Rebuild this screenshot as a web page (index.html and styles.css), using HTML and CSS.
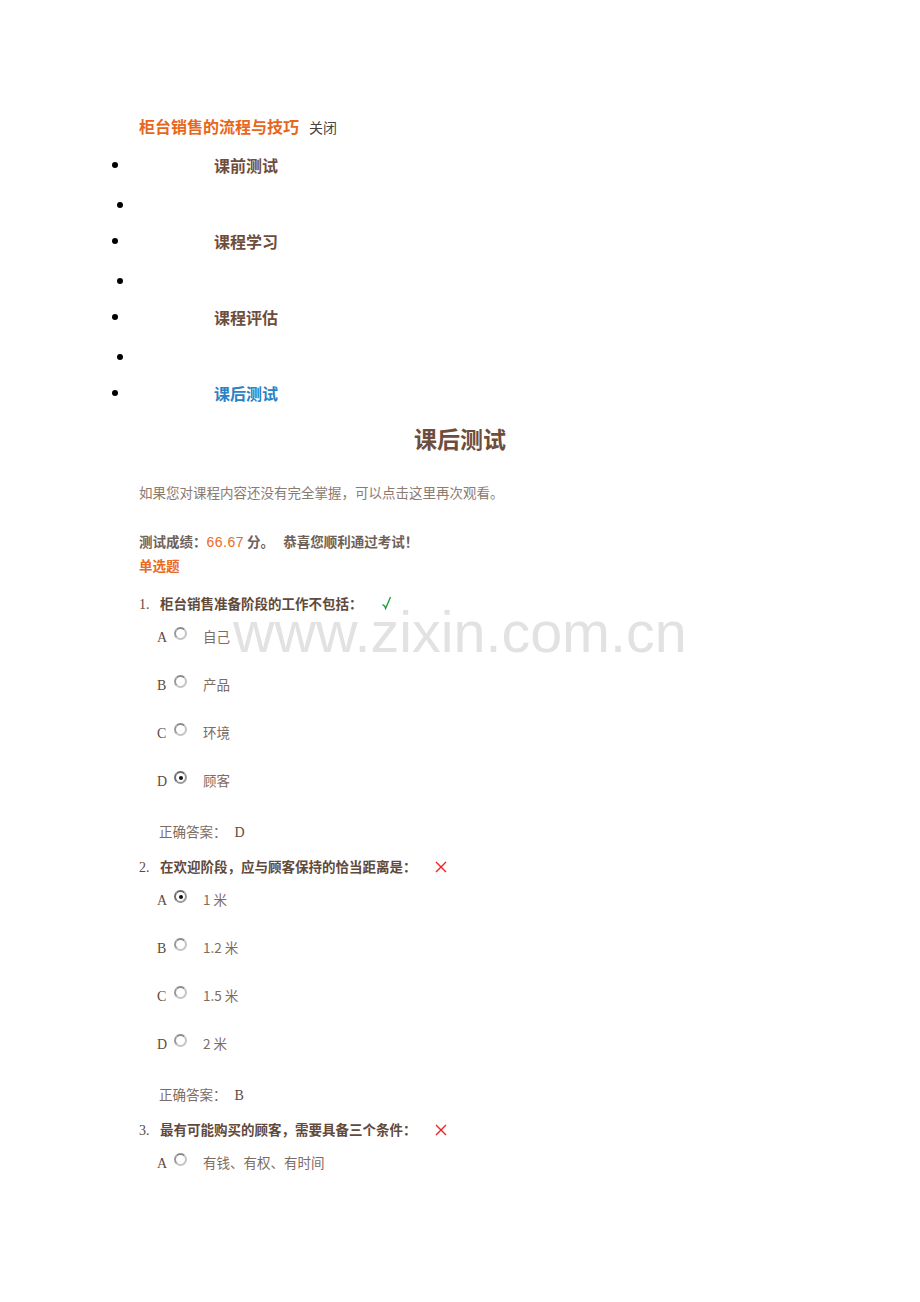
FILE: index.html
```html
<!DOCTYPE html>
<html lang="zh-CN">
<head>
    <meta charset="UTF-8">
    <title>课后测试</title>
    <link rel="stylesheet" href="styles.css">
</head>
<body>
<div class="page">
    <div class="course-title">
        <span class="course-name">柜台销售的流程与技巧</span>
        <span class="close">关闭</span>
    </div>

    <ul class="nav">
        <li class="nav-item"><span class="dot"></span><span class="nav-link">课前测试</span></li>
        <li class="nav-item minor"><span class="dot"></span></li>
        <li class="nav-item"><span class="dot"></span><span class="nav-link">课程学习</span></li>
        <li class="nav-item minor"><span class="dot"></span></li>
        <li class="nav-item"><span class="dot"></span><span class="nav-link">课程评估</span></li>
        <li class="nav-item minor"><span class="dot"></span></li>
        <li class="nav-item"><span class="dot"></span><span class="nav-link active">课后测试</span></li>
    </ul>

    <h2 class="page-title">课后测试</h2>

    <p class="intro">如果您对课程内容还没有完全掌握，可以点击这里再次观看。</p>

    <p class="score">测试成绩：<span class="score-num">66.67</span> 分。 <span class="congrats">恭喜您顺利通过考试！</span></p>
    <p class="section">单选题</p>

    <div class="question">
        <div class="q-title">
            <span class="q-num">1.</span><span class="q-text">柜台销售准备阶段的工作不包括：</span><svg class="mark" width="12" height="14" viewBox="0 0 12 14"><path d="M1.5 8.5 L3.8 10.2 L4.6 12.5 L9.5 1" fill="none" stroke="#22a03a" stroke-width="1.4"/></svg>
        </div>
        <div class="option"><span class="opt-key">A</span><span class="radio"></span><span class="opt-text">自己</span></div>
        <div class="option"><span class="opt-key">B</span><span class="radio"></span><span class="opt-text">产品</span></div>
        <div class="option"><span class="opt-key">C</span><span class="radio"></span><span class="opt-text">环境</span></div>
        <div class="option"><span class="opt-key">D</span><span class="radio checked"></span><span class="opt-text">顾客</span></div>
        <div class="answer">正确答案：<span class="answer-key">D</span></div>
    </div>

    <div class="question">
        <div class="q-title">
            <span class="q-num">2.</span><span class="q-text">在欢迎阶段，应与顾客保持的恰当距离是：</span><svg class="mark cross" width="12" height="12" viewBox="0 0 12 12"><path d="M1 1 L11 11 M11 1 L1 11" fill="none" stroke="#f02020" stroke-width="1.4"/></svg>
        </div>
        <div class="option"><span class="opt-key">A</span><span class="radio checked"></span><span class="opt-text">1 米</span></div>
        <div class="option"><span class="opt-key">B</span><span class="radio"></span><span class="opt-text">1.2 米</span></div>
        <div class="option"><span class="opt-key">C</span><span class="radio"></span><span class="opt-text">1.5 米</span></div>
        <div class="option"><span class="opt-key">D</span><span class="radio"></span><span class="opt-text">2 米</span></div>
        <div class="answer">正确答案：<span class="answer-key">B</span></div>
    </div>

    <div class="question">
        <div class="q-title">
            <span class="q-num">3.</span><span class="q-text">最有可能购买的顾客，需要具备三个条件：</span><svg class="mark cross" width="12" height="12" viewBox="0 0 12 12"><path d="M1 1 L11 11 M11 1 L1 11" fill="none" stroke="#f02020" stroke-width="1.4"/></svg>
        </div>
        <div class="option"><span class="opt-key">A</span><span class="radio"></span><span class="opt-text">有钱、有权、有时间</span></div>
    </div>

    <div class="watermark">www.zixin.com.cn</div>
</div>
</body>
</html>
```

FILE: styles.css
```css
body {
    margin: 0;
    background-color: #fff;
    font-family: "Liberation Serif", "Noto Sans CJK SC", serif;
}
.page {
    position: relative;
    width: 920px;
    padding: 114px 0 0 139px;
    box-sizing: border-box;
}
.course-title {
    height: 24px;
    line-height: 24px;
}
.course-name {
    font-family: "Noto Sans CJK SC", sans-serif;
    font-size: 16px;
    font-weight: bold;
    color: #e8661c;
}
.close {
    font-family: "Noto Sans CJK SC", sans-serif;
    font-size: 14px;
    color: #444;
    margin-left: 6px;
}
.nav {
    list-style: none;
    margin: 8px 0 0 -27px;
    padding: 0;
}
.nav-item {
    display: flex;
    align-items: center;
    height: 38px;
}
.dot {
    width: 6px;
    height: 6px;
    border-radius: 50%;
    background-color: #000;
    flex-shrink: 0;
}
.nav-item.minor .dot {
    margin: 4px 0 0 5px;
}
.nav-link {
    font-family: "Noto Sans CJK SC", sans-serif;
    font-size: 16px;
    font-weight: bold;
    color: #6e4d3c;
    margin-left: 96px;
}
.nav-link.active {
    color: #2b82c4;
}
.page-title {
    margin: 11px 0 0 -139px;
    text-align: center;
    font-family: "Noto Sans CJK SC", sans-serif;
    font-size: 23px;
    line-height: 30px;
    color: #6e4d3c;
}
.intro {
    margin: 29px 0 0;
    font-family: "Noto Sans CJK SC", sans-serif;
    font-size: 13.5px;
    line-height: 20px;
    color: #8b7a6f;
}
.score {
    margin: 29px 0 0;
    font-family: "Noto Sans CJK SC", sans-serif;
    font-size: 13.5px;
    font-weight: bold;
    line-height: 20px;
    color: #6f6158;
}
.score-num {
    font-family: "Liberation Sans", sans-serif;
    font-weight: normal;
    font-size: 14px;
    letter-spacing: 0.5px;
    color: #ea6a1e;
}
.congrats {
    margin-left: 6px;
}
.section {
    margin: 3px 0 0;
    font-family: "Noto Sans CJK SC", sans-serif;
    font-size: 13.5px;
    font-weight: bold;
    line-height: 20px;
    color: #ea6a1e;
}
.question {
    margin-top: 18px;
}
.question + .question {
    margin-top: 15px;
}
.q-title {
    height: 20px;
    line-height: 20px;
    font-size: 14px;
    color: #5f4a3c;
}
.q-num {
    display: inline-block;
    width: 21px;
}
.q-text {
    font-family: "Noto Sans CJK SC", sans-serif;
    font-size: 13.5px;
    font-weight: bold;
}
.mark {
    margin-left: 18px;
    vertical-align: -1px;
}
.option {
    height: 20px;
    line-height: 20px;
    margin: 13px 0 0 18px;
    font-size: 14px;
    color: #7d6c61;
}
.option + .option {
    margin-top: 28px;
}
.opt-key {
    display: inline-block;
    width: 17px;
    color: #5f4a3c;
}
.radio {
    display: inline-block;
    width: 9px;
    height: 9px;
    border: 2px solid #c4c4c4;
    border-top-color: #8a8a8a;
    border-left-color: #9a9a9a;
    border-radius: 50%;
    vertical-align: 2px;
    position: relative;
    background-color: #fff;
}
.radio.checked {
    border-color: #9a9a9a;
    border-top-color: #6a6a6a;
    border-left-color: #707070;
}
.radio.checked::after {
    content: "";
    position: absolute;
    left: 2.5px;
    top: 2.5px;
    width: 4px;
    height: 4px;
    border-radius: 50%;
    background-color: #111;
}
.opt-text {
    margin-left: 16px;
    font-family: "Noto Sans CJK SC", sans-serif;
    font-size: 13.5px;
}
.answer {
    margin: 31px 0 0 20px;
    height: 20px;
    line-height: 20px;
    font-family: "Noto Sans CJK SC", sans-serif;
    font-size: 13.5px;
    color: #7d6c61;
}
.answer-key {
    font-family: "Liberation Serif", serif;
    font-size: 14px;
    color: #5f4a3c;
    margin-left: 8px;
}
.watermark {
    position: absolute;
    left: 233px;
    top: 604px;
    font-family: "Liberation Sans", sans-serif;
    font-size: 57.5px;
    line-height: 57px;
    color: rgba(190, 190, 190, 0.45);
    pointer-events: none;
}
```
